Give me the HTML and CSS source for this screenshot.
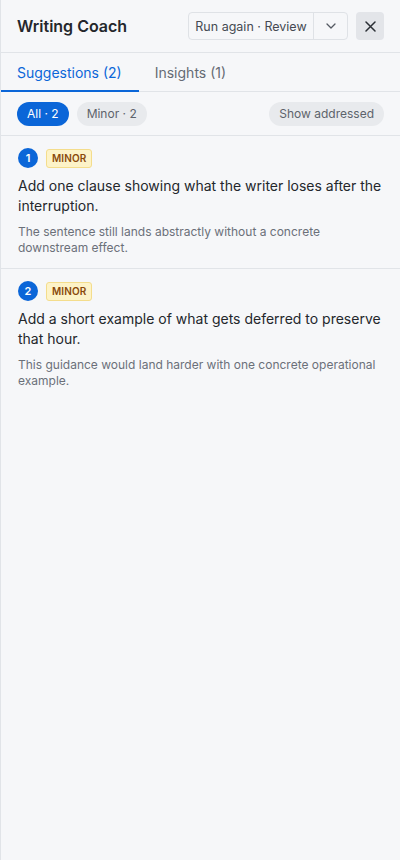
FILE: index.html
```html
<!DOCTYPE html>
<html>
<head>
<meta charset="utf-8">
<link rel="stylesheet" href="styles.css">
</head>
<body>
<div class="panel">
  <header class="header">
    <h1 class="title">Writing Coach</h1>
    <div class="actions">
      <div class="split">
        <button class="split-main">Run again · Review</button>
        <button class="split-toggle" aria-label="More">
          <svg width="10" height="6" viewBox="0 0 10 6"><path d="M1 1l4 4 4-4" fill="none" stroke="#555a62" stroke-width="1.3" stroke-linecap="round" stroke-linejoin="round"/></svg>
        </button>
      </div>
      <button class="close" aria-label="Close">
        <svg width="11" height="11" viewBox="0 0 11 11"><path d="M1 1l9 9M10 1l-9 9" fill="none" stroke="#2b2f35" stroke-width="1.5" stroke-linecap="round"/></svg>
      </button>
    </div>
  </header>
  <nav class="tabs">
    <div class="tab active">Suggestions (2)</div>
    <div class="tab">Insights (1)</div>
  </nav>
  <div class="filters">
    <div class="pills">
      <span class="pill pill-active">All · 2</span>
      <span class="pill">Minor · 2</span>
    </div>
    <span class="pill">Show addressed</span>
  </div>
  <div class="list">
    <article class="card">
      <div class="meta">
        <span class="num">1</span>
        <span class="badge">MINOR</span>
      </div>
      <p class="card-title">Add one clause showing what the writer loses after the interruption.</p>
      <p class="card-desc">The sentence still lands abstractly without a concrete downstream effect.</p>
    </article>
    <article class="card">
      <div class="meta">
        <span class="num">2</span>
        <span class="badge">MINOR</span>
      </div>
      <p class="card-title">Add a short example of what gets deferred to preserve that hour.</p>
      <p class="card-desc">This guidance would land harder with one concrete operational example.</p>
    </article>
  </div>
</div>
</body>
</html>
```
FILE: styles.css
```css
* { box-sizing: border-box; }
html, body { margin: 0; padding: 0; }
body {
  font-family: Inter, "Noto Sans", sans-serif;
  background: #f6f7f9;
  color: #1f2328;
}
.panel {
  min-height: 860px;
  border-left: 1px solid #e1e4e8;
  background: #f6f7f9;
}
.header {
  height: 53px;
  display: flex;
  align-items: center;
  justify-content: space-between;
  padding: 0 16px 0 16px;
  border-bottom: 1px solid #e1e4e8;
}
.title {
  margin: 0;
  font-size: 16px;
  font-weight: 600;
  color: #24272c;
}
.actions { display: flex; align-items: center; gap: 8px; }
.split {
  display: flex;
  height: 28px;
  border: 1px solid #dfe2e6;
  border-radius: 4px;
  background: #f6f7f9;
}
.split button {
  border: 0;
  background: transparent;
  font-family: inherit;
  padding: 0;
  display: flex;
  align-items: center;
  justify-content: center;
}
.split-main {
  font-size: 12.5px;
  color: #454a52;
  width: 125px;
  border-right: 1px solid #dfe2e6 !important;
}
.split-toggle { width: 33px; }
.close {
  width: 28px;
  height: 28px;
  border: 0;
  border-radius: 4px;
  background: #e3e5e9;
  display: flex;
  align-items: center;
  justify-content: center;
  padding: 0;
}
.tabs {
  display: flex;
  height: 39px;
  border-bottom: 1px solid #e1e4e8;
}
.tab {
  padding: 1px 17px 0 16px;
  font-size: 14px;
  color: #656b74;
  display: flex;
  align-items: center;
  border-bottom: 2px solid transparent;
  margin-bottom: -1px;
}
.tab.active {
  color: #0b66d8;
  border-bottom-color: #0b66d8;
}
.filters {
  display: flex;
  justify-content: space-between;
  align-items: center;
  height: 44px;
  padding: 0 16px;
  border-bottom: 1px solid #e1e4e8;
}
.pills { display: flex; gap: 8px; }
.pill {
  display: inline-flex;
  align-items: center;
  height: 24px;
  padding: 0 10px;
  border-radius: 12px;
  background: #e8eaed;
  color: #5d636b;
  font-size: 12px;
}
.pill-active {
  background: #0b66d8;
  color: #ffffff;
}
.card {
  padding: 12px 16px 12px 17px;
  border-bottom: 1px solid #e1e4e8;
}
.card:last-child { border-bottom: 0; }
.meta { display: flex; align-items: center; gap: 8px; }
.num {
  width: 20px;
  height: 20px;
  border-radius: 50%;
  background: #0b66d8;
  color: #fff;
  font-size: 11px;
  font-weight: 600;
  display: flex;
  align-items: center;
  justify-content: center;
}
.badge {
  height: 19px;
  padding: 0 5px;
  display: inline-flex;
  align-items: center;
  background: #fdf3c8;
  border: 1px solid #f4dd8c;
  border-radius: 3px;
  color: #8a4a0c;
  font-size: 10px;
  font-weight: 600;
  letter-spacing: 0.1px;
}
.card-title {
  margin: 8px 0 0;
  font-size: 14px;
  line-height: 20px;
  color: #24272c;
}
.card-desc {
  margin: 8px 0 0;
  font-size: 12px;
  line-height: 16px;
  color: #6b7079;
}
```
